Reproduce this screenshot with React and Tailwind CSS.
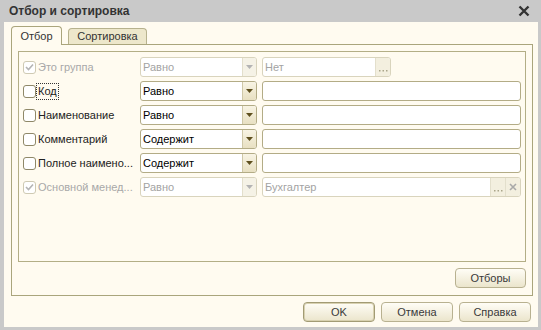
import React from "react";

const rows = [
  { label: "Это группа", cond: "Равно", value: "Нет", disabled: true, checked: true, kind: "short" },
  { label: "Код", cond: "Равно", value: "", focus: true },
  { label: "Наименование", cond: "Равно", value: "" },
  { label: "Комментарий", cond: "Содержит", value: "" },
  { label: "Полное наимено...", cond: "Содержит", value: "" },
  { label: "Основной менед...", cond: "Равно", value: "Бухгалтер", disabled: true, checked: true, kind: "clear" },
];

function Check({ checked, disabled }) {
  return (
    <div
      className={`w-[13px] h-[13px] rounded-[3px] border bg-white flex items-center justify-center shrink-0 ${
        disabled ? "border-[#cfcab3]" : "border-[#8f8868]"
      }`}
    >
      {checked && (
        <svg width="9" height="8" viewBox="0 0 9 8">
          <path d="M1 4 L3.5 6.5 L8 1.5" fill="none" stroke="#b4b4b4" strokeWidth="1.6" />
        </svg>
      )}
    </div>
  );
}

function Combo({ text, disabled }) {
  return (
    <div
      className={`w-[117px] h-[20px] rounded-[3px] border flex bg-white overflow-hidden ${
        disabled ? "border-[#d9d4bd]" : "border-[#b3ac86]"
      }`}
    >
      <div className={`flex-1 pl-[2px] leading-[18px] ${disabled ? "text-[#a3a3a3]" : "text-black"}`}>{text}</div>
      <div
        className={`w-[14px] border-l flex items-center justify-center ${
          disabled ? "bg-[#f5f2e6] border-[#e3dfcc]" : "bg-gradient-to-b from-[#f8f4e4] to-[#e8e0c2] border-[#cfc8a8]"
        }`}
      >
        <svg width="7" height="4" viewBox="0 0 7 4">
          <path d="M0 0 H7 L3.5 4 Z" fill={disabled ? "#b3b3b3" : "#5e4f1e"} />
        </svg>
      </div>
    </div>
  );
}

function SmallBtn({ children }) {
  return (
    <div className="w-[15px] border-l border-[#e3dfcc] bg-[#f3efdf] flex items-end justify-center pb-[4px] text-[#b0aa90]">
      {children}
    </div>
  );
}

function Dots() {
  return (
    <svg width="9" height="2" viewBox="0 0 9 2">
      <rect x="0" y="0" width="1.5" height="1.5" fill="#aaa58a" />
      <rect x="3.5" y="0" width="1.5" height="1.5" fill="#aaa58a" />
      <rect x="7" y="0" width="1.5" height="1.5" fill="#aaa58a" />
    </svg>
  );
}

function Value({ row }) {
  if (row.kind === "short") {
    return (
      <div className="w-[129px] h-[20px] rounded-[3px] border border-[#d9d4bd] bg-white flex overflow-hidden">
        <div className="flex-1 pl-[2px] leading-[18px] text-[#a3a3a3]">{row.value}</div>
        <SmallBtn>
          <Dots />
        </SmallBtn>
      </div>
    );
  }
  if (row.kind === "clear") {
    return (
      <div className="w-[259px] h-[20px] rounded-[3px] border border-[#d9d4bd] bg-white flex overflow-hidden">
        <div className="flex-1 pl-[2px] leading-[18px] text-[#a3a3a3]">{row.value}</div>
        <SmallBtn>
          <Dots />
        </SmallBtn>
        <div className="w-[15px] border-l border-[#e3dfcc] bg-[#f3efdf] flex items-center justify-center">
          <svg width="8" height="8" viewBox="0 0 8 8">
            <path d="M1 1 L7 7 M7 1 L1 7" stroke="#a9a9a9" strokeWidth="1.6" />
          </svg>
        </div>
      </div>
    );
  }
  return <div className="w-[259px] h-[20px] rounded-[3px] border border-[#b3ac86] bg-white" />;
}

function Button({ children, primary, width = "w-[72px]" }) {
  return (
    <div
      className={`${width} h-[20px] rounded-[4px] border bg-gradient-to-b from-[#fffdf6] to-[#ebe5cc] flex items-center justify-center text-[#3a3a3a] ${
        primary ? "border-[#a29b74] shadow-[inset_0_0_0_1px_#d8d1b0]" : "border-[#b8b190]"
      }`}
    >
      {children}
    </div>
  );
}

export default function App() {
  return (
    <div className="w-[541px] h-[330px] bg-[#c9c9c9] flex flex-col font-['Liberation_Sans',Arial,sans-serif] text-[11px] overflow-hidden">
      {/* Title bar */}
      <div className="h-[22px] flex items-center justify-between pl-[9px] pr-[11px] shrink-0">
        <span className="font-bold text-[12px] text-[#333]">Отбор и сортировка</span>
        <svg width="12" height="12" viewBox="0 0 12 12">
          <path d="M1.5 1.5 L10.5 10.5 M10.5 1.5 L1.5 10.5" stroke="#333" strokeWidth="2.4" />
        </svg>
      </div>

      <div className="flex-1 ml-[4px] mr-[3px] mb-[3px] bg-[#fffbf0] flex flex-col pl-[7px] pt-[4px]">
        {/* Tabs */}
        <div className="flex items-end h-[18px] gap-[6px] relative z-10">
          <div className="w-[51px] h-[19px] -mb-[1px] border border-b-0 border-[#aaa57c] rounded-t-[4px] bg-[#fffbf0] flex items-center justify-center text-[#333]">
            Отбор
          </div>
          <div className="w-[79px] h-[16px] border border-b-0 border-[#b7b28e] rounded-t-[4px] bg-[#ede7cb] flex items-center justify-center text-[#333]">
            Сортировка
          </div>
        </div>

        {/* Tab panel */}
        <div className="w-[522px] h-[252px] border border-[#aaa57c] flex flex-col pl-[6px] pt-[6px]">
          <div className="w-[508px] h-[211px] border border-[#b3ae86] flex flex-col gap-[4px] pl-[4px] pt-[5px]">
            {rows.map((row) => (
              <div key={row.label} className="flex items-center h-[20px]">
                <div className="w-[117px] flex items-center gap-[1px]">
                  <Check checked={row.checked} disabled={row.disabled} />
                  <span
                    className={`whitespace-nowrap leading-[15px] px-[1px] ${
                      row.disabled ? "text-[#a8a8a8]" : "text-[#222]"
                    } ${row.focus ? "outline outline-1 outline-dotted outline-[#333]" : ""}`}
                  >
                    {row.label}
                  </span>
                </div>
                <Combo text={row.cond} disabled={row.disabled} />
                <div className="w-[5px]" />
                <Value row={row} />
              </div>
            ))}
          </div>
          <div className="w-[508px] flex justify-end mt-[6px]">
            <Button width="w-[71px]">Отборы</Button>
          </div>
        </div>

        {/* Bottom buttons */}
        <div className="w-[520px] flex justify-end gap-[6px] mt-[6px]">
          <Button primary>OK</Button>
          <Button>Отмена</Button>
          <Button>Справка</Button>
        </div>
      </div>
    </div>
  );
}
